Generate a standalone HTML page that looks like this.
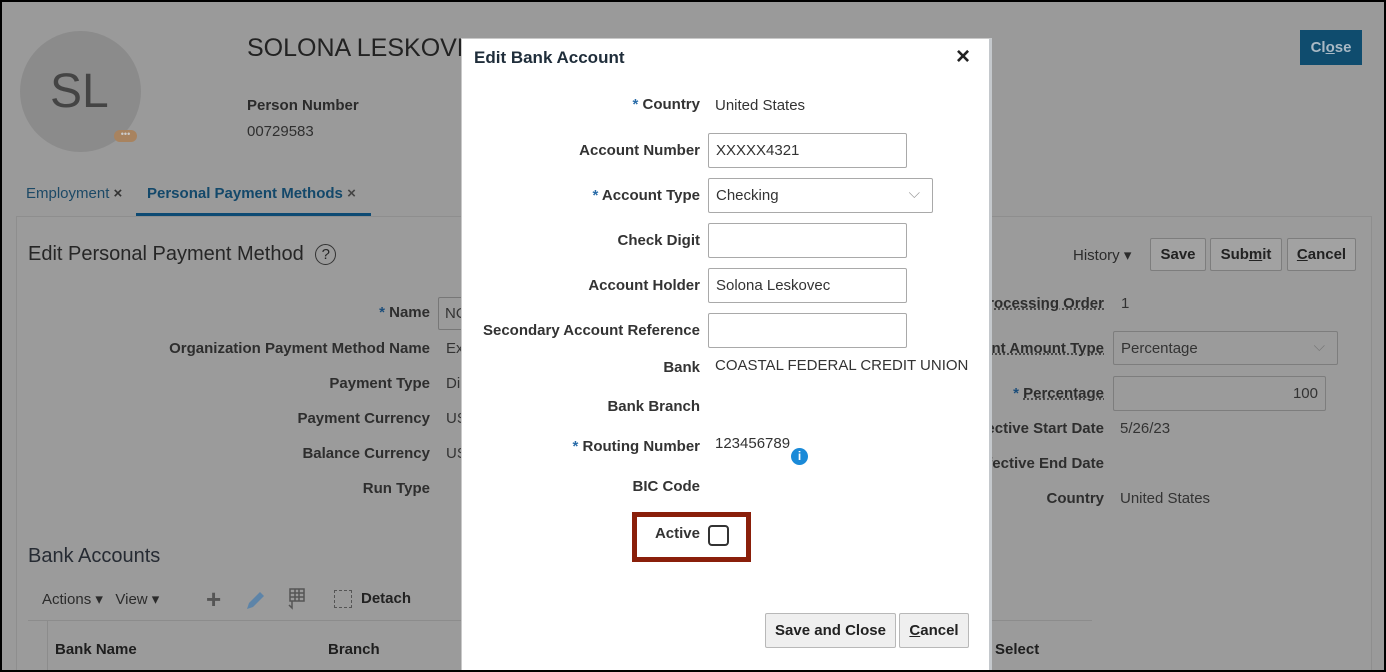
<!DOCTYPE html>
<html><head><meta charset="utf-8"><style>
*{margin:0;padding:0;box-sizing:border-box}
html,body{width:1386px;height:672px;overflow:hidden}
body{background:#9a9a9a;font-family:"Liberation Sans",Arial,sans-serif;position:relative;color:#2b2b2b}
.a{position:absolute;white-space:nowrap}
.lb{font-weight:bold;font-size:15px;color:#2e2e2e;text-align:right}
.v{font-size:15px;color:#333}
.st{color:#1b4d7a}
.dl{font-weight:bold;font-size:15px;color:#333;text-align:right;right:686px}
.dv{font-size:15px;color:#333}
.in{position:absolute;border:1px solid #a9a9a9;border-radius:2px;background:#fff;height:35px;font-size:15px;padding:8px 7px;color:#333}
.btn{position:absolute;border:1px solid #7d7d7d;background:#a2a2a2;font-weight:bold;font-size:15px;color:#222;text-align:center;border-radius:2px}
.dbtn{position:absolute;border:1px solid #b8b8b8;background:#efefef;font-weight:bold;font-size:15px;color:#222;text-align:center;border-radius:2px;height:35px;line-height:33px}
</style></head><body>
<div style="position:absolute;left:0;top:0;width:1386px;height:672px;border:2px solid #000;z-index:50;pointer-events:none"></div>
<!-- header -->
<div class="a" style="left:20px;top:31px;width:121px;height:121px;border-radius:50%;background:#8b8b8b"></div>
<div class="a" style="left:50px;top:64px;font-size:48px;color:#444">SL</div>
<div class="a" style="left:114px;top:130px;width:23px;height:12px;border-radius:6px;background:#a8835f;font-size:9px;color:#ccc;text-align:center;line-height:8px">•••</div>
<div class="a" style="left:247px;top:34px;font-size:25px;color:#222">SOLONA LESKOVEC</div>
<div class="a" style="left:247px;top:97px;font-size:15px;font-weight:bold;color:#2b2b2b">Person Number</div>
<div class="a" style="left:247px;top:123px;font-size:15px;color:#2f2f2f">00729583</div>
<div class="a" style="left:1300px;top:30px;width:62px;height:35px;background:#0f4c6e;color:#a9b9c5;font-weight:bold;font-size:15px;text-align:center;line-height:35px">Cl<u>o</u>se</div>
<!-- tabs -->
<div class="a" style="left:26px;top:185px;font-size:15px;color:#1c4966">Employment <span style="color:#333;font-weight:bold">×</span></div>
<div class="a" style="left:147px;top:185px;font-size:15px;font-weight:bold;color:#13486a">Personal Payment Methods <span style="color:#444">×</span></div>
<div class="a" style="left:136px;top:213px;width:235px;height:3px;background:#0d4a73"></div>
<!-- panel -->
<div class="a" style="left:16px;top:216px;width:1356px;height:470px;border:1px solid #8e8e8e;background:#9b9b9b"></div>
<div class="a" style="left:28px;top:243px;font-size:20px;color:#262626">Edit Personal Payment Method <span style="display:inline-block;width:21px;height:21px;border:1.5px solid #333;border-radius:50%;font-size:15px;text-align:center;line-height:19px;margin-left:6px;vertical-align:1px">?</span></div>
<div class="a lb" style="right:956px;top:304px"><span class="st">*</span> Name</div>
<div class="a" style="left:438px;top:297px;width:40px;height:33px;border:1px solid #777;border-radius:2px;padding:7px 6px;font-size:15px;color:#333">NO</div>
<div class="a lb" style="right:956px;top:340px">Organization Payment Method Name</div>
<div class="a v" style="left:446px;top:340px">Ex</div>
<div class="a lb" style="right:956px;top:375px">Payment Type</div>
<div class="a v" style="left:446px;top:375px">Di</div>
<div class="a lb" style="right:956px;top:410px">Payment Currency</div>
<div class="a v" style="left:446px;top:410px">US</div>
<div class="a lb" style="right:956px;top:445px">Balance Currency</div>
<div class="a v" style="left:446px;top:445px">US</div>
<div class="a lb" style="right:956px;top:480px">Run Type</div>
<div class="a" style="left:28px;top:545px;font-size:20px;color:#262b33">Bank Accounts</div>
<div class="a" style="left:42px;top:590px;font-size:15px;color:#2b2b2b">Actions ▾&nbsp;&nbsp; View ▾</div>
<div class="a" style="left:206px;top:586px;font-size:26px;font-weight:bold;color:#555;line-height:26px">+</div>
<svg class="a" style="left:244px;top:588px" width="24" height="24" viewBox="0 0 24 24"><path d="M3 21l2-6 11-11 4 4-11 11z" fill="#5d84a8"/></svg>
<svg class="a" style="left:284px;top:587px" width="22" height="24" viewBox="0 0 22 24"><rect x="6" y="2" width="14" height="12" fill="none" stroke="#555" stroke-width="1.5"/><path d="M6 6h14M6 10h14M11 2v12M15 2v12M8 14v7l-3-3" fill="none" stroke="#555" stroke-width="1.5"/></svg>
<div class="a" style="left:334px;top:590px;width:18px;height:18px;border:1.5px dashed #555"></div>
<div class="a" style="left:361px;top:590px;font-size:15px;font-weight:bold;color:#222">Detach</div>
<div class="a" style="left:28px;top:620px;width:1064px;height:1px;background:#8c8c8c"></div>
<div class="a" style="left:47px;top:621px;width:1px;height:60px;background:#8c8c8c"></div>
<div class="a" style="left:55px;top:641px;font-size:15px;font-weight:bold;color:#1e1e1e">Bank Name</div>
<div class="a" style="left:328px;top:641px;font-size:15px;font-weight:bold;color:#1e1e1e">Branch</div>
<div class="a" style="left:995px;top:641px;font-size:15px;font-weight:bold;color:#1e1e1e">Select</div>
<!-- right side -->
<div class="a" style="left:1073px;top:246px;font-size:15px;color:#2b2b2b">History ▾</div>
<div class="btn" style="left:1150px;top:238px;width:56px;height:33px;line-height:31px">Save</div>
<div class="btn" style="left:1210px;top:238px;width:72px;height:33px;line-height:31px">Sub<u>m</u>it</div>
<div class="btn" style="left:1287px;top:238px;width:69px;height:33px;line-height:31px"><u>C</u>ancel</div>
<div class="a lb" style="right:282px;top:295px;text-decoration:underline dotted">Processing Order</div>
<div class="a v" style="left:1121px;top:295px">1</div>
<div class="a lb" style="right:282px;top:340px;text-decoration:underline dotted">Payment Amount Type</div>
<div class="a" style="left:1113px;top:331px;width:225px;height:34px;border:1px solid #7d7d7d;border-radius:2px;font-size:15px;padding:8px 7px;color:#333">Percentage<span style="position:absolute;right:12px;top:6px;color:#777">⌵</span></div>
<div class="a lb" style="right:282px;top:385px"><span class="st">*</span> <span style="text-decoration:underline dotted">Percentage</span></div>
<div class="a" style="left:1113px;top:376px;width:213px;height:35px;border:1px solid #7d7d7d;border-radius:2px;font-size:15px;padding:8px 7px;color:#333;text-align:right">100</div>
<div class="a lb" style="right:282px;top:420px">Effective Start Date</div>
<div class="a v" style="left:1120px;top:420px">5/26/23</div>
<div class="a lb" style="right:282px;top:455px">Effective End Date</div>
<div class="a lb" style="right:282px;top:490px">Country</div>
<div class="a v" style="left:1120px;top:490px">United States</div>
<!-- dialog -->
<div class="a" style="left:461px;top:38px;width:531px;height:634px;background:#fff;border:1px solid #c9c9c9;border-right:3px solid #c4c8cc;z-index:10">
<div class="a" style="left:12px;top:9px;font-size:17px;font-weight:bold;color:#1f2d3a">Edit Bank Account</div>
<div class="a" style="left:494px;top:4px;font-size:24px;font-weight:bold;color:#222">×</div>
</div>
<div style="position:absolute;left:0;top:0;width:1386px;height:672px;z-index:11">
<div class="a dl" style="top:96px"><span style="color:#2a6ca8">*</span> Country</div>
<div class="a dv" style="left:715px;top:97px">United States</div>
<div class="a dl" style="top:142px">Account Number</div>
<div class="in" style="left:708px;top:133px;width:199px">XXXXX4321</div>
<div class="a dl" style="top:187px"><span style="color:#2a6ca8">*</span> Account Type</div>
<div class="in" style="left:708px;top:178px;width:225px">Checking<span style="position:absolute;right:12px;top:6px;color:#999">⌵</span></div>
<div class="a dl" style="top:232px">Check Digit</div>
<div class="in" style="left:708px;top:223px;width:199px"></div>
<div class="a dl" style="top:277px">Account Holder</div>
<div class="in" style="left:708px;top:268px;width:199px">Solona Leskovec</div>
<div class="a dl" style="top:322px">Secondary Account Reference</div>
<div class="in" style="left:708px;top:313px;width:199px"></div>
<div class="a dl" style="top:359px">Bank</div>
<div class="a dv" style="left:715px;top:357px">COASTAL FEDERAL CREDIT UNION</div>
<div class="a dl" style="top:398px">Bank Branch</div>
<div class="a dl" style="top:438px"><span style="color:#2a6ca8">*</span> Routing Number</div>
<div class="a dv" style="left:715px;top:435px">123456789</div>
<div class="a" style="left:791px;top:448px;width:17px;height:17px;border-radius:50%;background:#1a8ad8;color:#fff;font-size:12px;font-weight:bold;text-align:center;line-height:17px">i</div>
<div class="a dl" style="top:478px">BIC Code</div>
<div class="a" style="left:632px;top:512px;width:119px;height:50px;border:5px solid #8a1f0a"></div>
<div class="a dl" style="top:525px">Active</div>
<div class="a" style="left:708px;top:525px;width:21px;height:21px;border:2px solid #333;border-radius:4px"></div>
<div class="dbtn" style="left:765px;top:613px;width:131px">Save and Close</div>
<div class="dbtn" style="left:899px;top:613px;width:70px"><u>C</u>ancel</div>
</div>
</body></html>
